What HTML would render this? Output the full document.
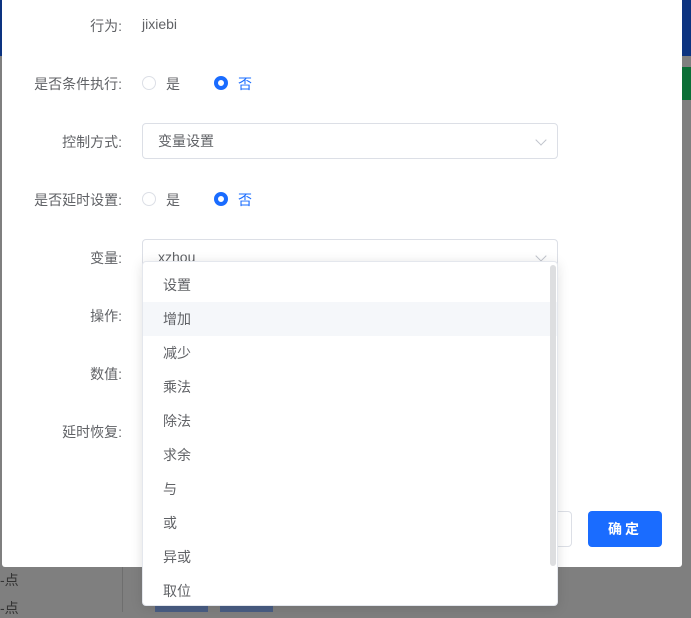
<!DOCTYPE html>
<html><head><meta charset="utf-8"><style>
*{margin:0;padding:0;box-sizing:border-box}
body{width:691px;height:612px;overflow:hidden;position:relative;background:#7f7f7f;font-family:"Liberation Sans","Noto Sans CJK SC",sans-serif;font-size:14px;color:#606266}
.abs{position:absolute}
.modal{left:2px;top:0;width:680px;height:567px;background:#fff;border-radius:0 0 3px 3px}
.lbl{position:absolute;right:569px;text-align:right;color:#606266;white-space:nowrap}
.radio{position:absolute;width:14px;height:14px;border-radius:50%;border:1px solid #dcdfe6;background:#fff}
.radio.on{border:4px solid #1a6cff;}
.sel{position:absolute;left:142px;width:416px;height:36px;border:1px solid #dcdfe6;border-radius:4px;padding-left:15px;line-height:34px;color:#606266}
.arr{position:absolute;right:12px;top:12px;width:8px;height:8px;border-right:1px solid #c0c4cc;border-bottom:1px solid #c0c4cc;transform:rotate(45deg)}
.dd{left:142px;top:261px;width:416px;height:345px;background:#fff;border:1px solid #e4e7ed;border-radius:4px;box-shadow:0 2px 12px rgba(0,0,0,.12);overflow:hidden}
.it{height:34px;line-height:34px;padding-left:20px;color:#606266}
.hl{background:#f5f7fa}
</style></head><body>
<div class="abs" style="left:0;top:0;width:691px;height:56px;background:#0c3380"></div>
<div class="abs" style="left:682px;top:67px;width:9px;height:33px;background:#0b6e36"></div>
<div class="abs" style="left:122px;top:567px;width:1px;height:45px;background:#6e6e6e"></div>
<div class="abs" style="left:0;top:570px;color:#333;font-size:14px">-点</div>
<div class="abs" style="left:0;top:598px;color:#333;font-size:14px">-点</div>
<div class="abs" style="left:155px;top:606px;width:53px;height:6px;background:#4a5e85"></div>
<div class="abs" style="left:220px;top:606px;width:53px;height:6px;background:#4a5e85"></div>
<div class="abs modal">
</div>
<div class="lbl" style="top:16px">行为:</div>
<div class="abs" style="left:142px;top:16px;color:#606266">jixiebi</div>
<div class="lbl" style="top:74px">是否条件执行:</div>
<div class="radio" style="left:142px;top:76px"></div><div class="abs" style="left:166px;top:74px">是</div>
<div class="radio on" style="left:214px;top:76px"></div><div class="abs" style="left:238px;top:74px;color:#1a6cff">否</div>
<div class="lbl" style="top:132px">控制方式:</div>
<div class="sel" style="top:123px">变量设置<div class="arr"></div></div>
<div class="lbl" style="top:190px">是否延时设置:</div>
<div class="radio" style="left:142px;top:192px"></div><div class="abs" style="left:166px;top:190px">是</div>
<div class="radio on" style="left:214px;top:192px"></div><div class="abs" style="left:238px;top:190px;color:#1a6cff">否</div>
<div class="lbl" style="top:248px">变量:</div>
<div class="sel" style="top:239px">xzhou<div class="arr"></div></div>
<div class="lbl" style="top:306px">操作:</div>
<div class="lbl" style="top:364px">数值:</div>
<div class="lbl" style="top:422px">延时恢复:</div>
<div class="abs" style="left:540px;top:511px;width:32px;height:36px;border:1px solid #dcdfe6;border-radius:4px;background:#fff"></div>
<div class="abs" style="left:588px;top:511px;width:74px;height:36px;background:#1a6cff;border-radius:4px;color:#fff;text-align:center;line-height:36px;letter-spacing:3px;font-weight:bold">确定</div>
<div class="abs dd">
<div style="height:6px"></div>
<div class="it">设置</div><div class="it hl">增加</div><div class="it">减少</div><div class="it">乘法</div><div class="it">除法</div><div class="it">求余</div><div class="it">与</div><div class="it">或</div><div class="it">异或</div><div class="it">取位</div>
<div class="abs" style="left:407px;top:3px;width:6px;height:301px;background:#dddee0;border-radius:3px"></div>
</div>
</body></html>
